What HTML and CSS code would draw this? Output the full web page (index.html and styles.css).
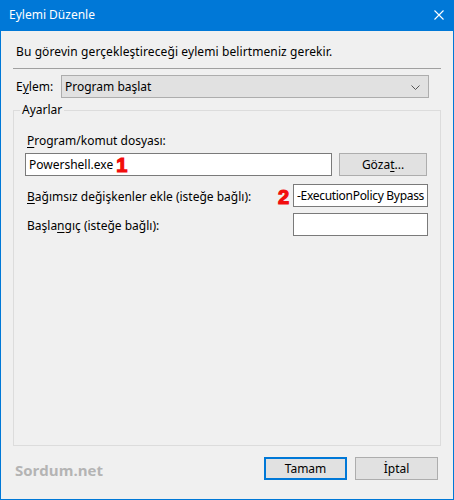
FILE: index.html
```html
<!DOCTYPE html>
<html lang="tr">
<head>
    <meta charset="UTF-8">
    <meta name="viewport" content="width=device-width, initial-scale=1.0">
    <title>Eylemi Düzenle</title>
    <link rel="stylesheet" href="styles.css">
</head>
<body>
    <div class="window">
        <div class="titlebar">
            <span class="title">Eylemi Düzenle</span>
            <svg class="close" width="10" height="10" viewBox="0 0 10 10">
                <path d="M0.5 0.5 L9.5 9.5 M9.5 0.5 L0.5 9.5" stroke="#fff" stroke-width="1.1" fill="none"/>
            </svg>
        </div>

        <div class="content">
            <p class="intro">Bu görevin gerçekleştireceği eylemi belirtmeniz gerekir.</p>
            <div class="separator"></div>

            <div class="action-row">
                <label class="action-label">E<u>y</u>lem:</label>
                <div class="combo">
                    <span>Program başlat</span>
                    <svg class="chevron" width="9" height="5" viewBox="0 0 9 5">
                        <path d="M0.5 0.5 L4.5 4.5 L8.5 0.5" stroke="#555" stroke-width="1" fill="none"/>
                    </svg>
                </div>
            </div>

            <fieldset class="group">
                <legend>Ayarlar</legend>

                <div class="field-label"><u>P</u>rogram/komut dosyası:</div>
                <div class="row first">
                    <div class="textbox wide">Powershell.exe<span class="mark one">1</span></div>
                    <button class="btn browse">Göza<u>t</u>...</button>
                </div>

                <div class="row second">
                    <span class="row-label"><u>B</u>ağımsız değişkenler ekle (isteğe bağlı):</span>
                    <span class="mark two">2</span>
                    <div class="textbox small">-ExecutionPolicy Bypass</div>
                </div>

                <div class="row third">
                    <span class="row-label">Başla<u>n</u>gıç (isteğe bağlı):</span>
                    <div class="textbox small push"></div>
                </div>
            </fieldset>

            <div class="footer">
                <span class="watermark">Sordum.net</span>
                <button class="btn default">Tamam</button>
                <button class="btn">İptal</button>
            </div>
        </div>
    </div>
</body>
</html>
```

FILE: styles.css
```css
body {
    margin: 0;
    font-family: "Noto Sans", "Open Sans", sans-serif;
    font-size: 12px;
    line-height: 16px;
    color: #000;
    background: #f0f0f0;
}
u {
    text-decoration-thickness: 1px;
    text-underline-offset: 2px;
}
.window {
    width: 454px;
    height: 500px;
    box-sizing: border-box;
    border: 1px solid #0078d7;
    border-top: none;
    background: #f0f0f0;
}
.titlebar {
    height: 31px;
    margin: 0 -1px;
    background: #0078d7;
    color: #fff;
    display: flex;
    align-items: center;
    justify-content: space-between;
    padding: 0 10px 0 9px;
}
.title {
    font-size: 12px;
    margin-top: -1px;
}
.close {
    margin-top: -1px;
}
.content {
    padding: 0 12px;
}
.intro {
    margin: 13px 0 0 3px;
    letter-spacing: 0.1px;
}
.separator {
    height: 1px;
    background: #a0a0a0;
    margin-top: 8px;
}
.action-row {
    display: flex;
    align-items: center;
    margin-top: 6px;
}
.action-label {
    margin-left: 3px;
    width: 45px;
}
.combo {
    flex: 1;
    margin-right: 12px;
    height: 23px;
    box-sizing: border-box;
    background: #e1e1e1;
    border: 1px solid #adadad;
    display: flex;
    align-items: center;
    justify-content: space-between;
    padding: 0 8px 0 3px;
}
.chevron {
    margin-top: 1px;
}
.group {
    margin: 4px 0 0;
    padding: 0 12px 0 11px;
    height: 344px;
    box-sizing: border-box;
    border: 1px solid #dcdcdc;
}
.group legend {
    padding: 0 2px;
    margin-left: -5px;
    line-height: 16px;
}
.field-label {
    margin-top: 15px;
    margin-left: 2px;
}
.row {
    display: flex;
    align-items: center;
}
.row.first {
    margin-top: 4px;
}
.row.second {
    margin-top: 8px;
}
.row.third {
    margin-top: 6px;
}
.row-label {
    margin-left: 2px;
    padding-top: 3px;
}
.textbox {
    height: 23px;
    box-sizing: border-box;
    background: #fff;
    border: 1px solid #7a7a7a;
    display: flex;
    align-items: center;
    padding: 0 2px 0 3px;
    white-space: nowrap;
    overflow: hidden;
}
.textbox.wide {
    width: 307px;
}
.textbox.small {
    width: 135px;
    letter-spacing: -0.3px;
}
.textbox.push {
    margin-left: auto;
}
.mark {
    font-family: "Liberation Sans", Arial, sans-serif;
    font-weight: bold;
    font-size: 20px;
    line-height: 20px;
    color: #f20d0d;
    -webkit-text-stroke: 1.2px #f20d0d;
}
.mark.one {
    margin-left: 3px;
    padding-top: 1px;
}
.mark.two {
    margin-left: auto;
    margin-right: 4px;
    padding-top: 2px;
}
.btn {
    height: 23px;
    box-sizing: border-box;
    background: #e1e1e1;
    border: 1px solid #adadad;
    font-family: inherit;
    font-size: 12px;
    color: #000;
    padding: 0;
}
.browse {
    width: 88px;
    margin-left: 7px;
}
.footer {
    display: flex;
    align-items: center;
    gap: 8px;
    margin-top: 11px;
    padding-right: 3px;
}
.footer .btn {
    width: 83px;
}
.footer .default {
    border: 2px solid #0078d7;
}
.watermark {
    margin-right: auto;
    margin-left: 2px;
    margin-top: 3px;
    font-family: "Open Sans", sans-serif;
    font-weight: bold;
    font-size: 15px;
    color: #b4b4b4;
}
```
